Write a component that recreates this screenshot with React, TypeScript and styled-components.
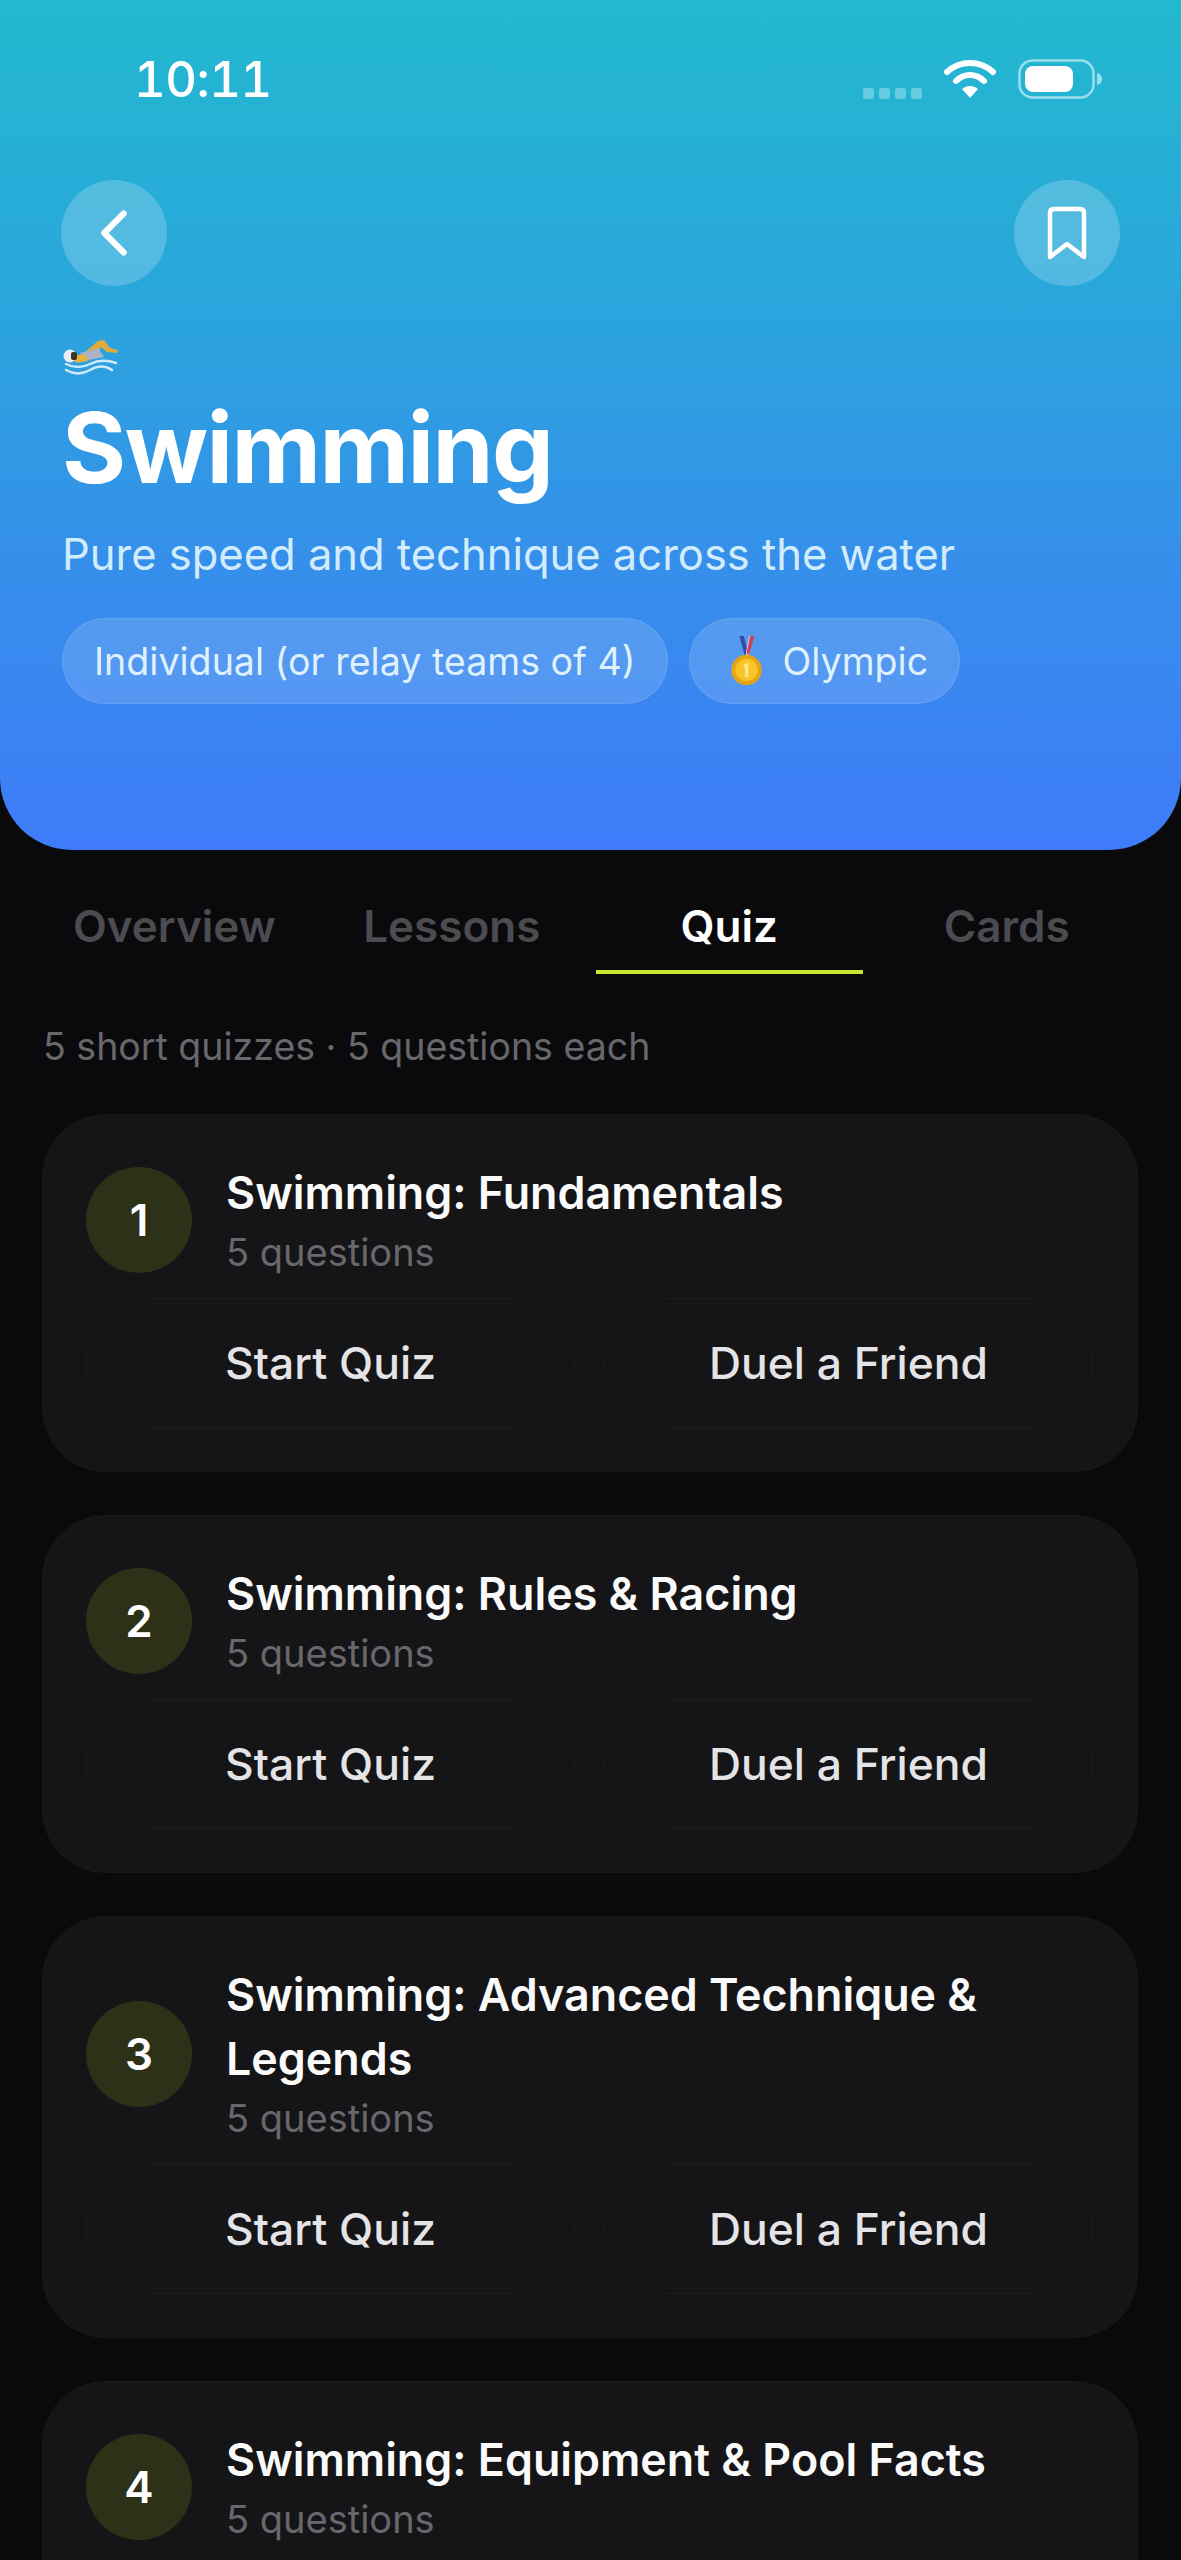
import React from "react";
import styled, { createGlobalStyle } from "styled-components";
import { ChevronLeft } from "lucide-react";

const GlobalStyle = createGlobalStyle`
  html, body {
    margin: 0;
    padding: 0;
    background: #0a0a0c;
  }
  * {
    box-sizing: border-box;
  }
`;

const Page = styled.div`
  width: 1181px;
  height: 2560px;
  overflow: hidden;
  background: #0a0a0c;
  font-family: "Inter", "Liberation Sans", sans-serif;
  color: #fff;
`;

const Hero = styled.header`
  height: 850px;
  padding: 0 62px;
  background: linear-gradient(180deg, #22b9cf 0%, #2aa6dc 35%, #3590ea 65%, #3f7bf9 100%);
  border-radius: 0 0 72px 72px;
`;

const StatusBar = styled.div`
  height: 160px;
  padding: 50px 17px 0 72px;
  display: flex;
  justify-content: space-between;
  align-items: flex-start;
`;

const Clock = styled.div`
  font-size: 49px;
  font-weight: 500;
  line-height: 60px;
  font-variant-numeric: tabular-nums;
  letter-spacing: -0.5px;
`;

const StatusIcons = styled.div`
  display: flex;
  align-items: center;
  gap: 22px;
  margin-top: 9px;
`;

const SignalDots = styled.div`
  display: flex;
  gap: 5px;
  margin-top: 28px;
`;

const SignalDot = styled.span`
  width: 11px;
  height: 11px;
  border-radius: 2px;
  background: rgba(255, 255, 255, 0.3);
`;

const NavRow = styled.div`
  margin: 20px -1px 0;
  display: flex;
  justify-content: space-between;
`;

const RoundButton = styled.button`
  width: 106px;
  height: 106px;
  border: 0;
  padding: 0;
  border-radius: 50%;
  background: rgba(255, 255, 255, 0.2);
  color: #fff;
  display: flex;
  align-items: center;
  justify-content: center;
`;

const SportIcon = styled.div`
  margin-top: 51px;
  height: 40px;
  line-height: 0;
`;

const Title = styled.h1`
  margin: 16px 0 0;
  font-size: 98px;
  line-height: 110px;
  font-weight: 700;
  letter-spacing: -1.5px;
`;

const Subtitle = styled.p`
  margin: 23px 0 0;
  font-size: 43.5px;
  line-height: 56px;
  font-weight: 400;
  color: rgba(226, 246, 255, 0.92);
`;

const ChipRow = styled.div`
  margin-top: 36px;
  display: flex;
  gap: 21px;
`;

const Chip = styled.div`
  height: 86px;
  padding: 0 31px;
  border-radius: 43px;
  background: rgba(255, 255, 255, 0.14);
  border: 1px solid rgba(255, 255, 255, 0.1);
  display: flex;
  align-items: center;
  gap: 20px;
  font-size: 37.6px;
  color: rgba(232, 248, 255, 0.95);
  white-space: nowrap;
`;

const MedalSlot = styled.span`
  margin-left: 9px;
  line-height: 0;
`;

const Tabs = styled.nav`
  margin-top: 42px;
  padding: 0 41px;
  display: grid;
  grid-template-columns: repeat(4, 1fr);
  column-gap: 11px;
`;

const Tab = styled.div<{ $active?: boolean }>`
  height: 82px;
  padding-bottom: 10px;
  display: flex;
  align-items: center;
  justify-content: center;
  font-size: 44px;
  font-weight: 600;
  color: ${(p) => (p.$active ? "#ffffff" : "#4b4b50")};
  border-bottom: 4px solid ${(p) => (p.$active ? "#c8e62e" : "transparent")};
`;

const Content = styled.main`
  padding: 0 43px 0 42px;
`;

const Meta = styled.p`
  margin: 50px 0 44px 1px;
  font-size: 37.5px;
  line-height: 46px;
  color: #67676c;
`;

const CardList = styled.div`
  display: flex;
  flex-direction: column;
  gap: 43px;
`;

const Card = styled.section`
  padding: 46px 44px 43px 43px;
  border-radius: 64px;
  background: #151517;
  border: 1px solid #19191b;
`;

const CardHeader = styled.div`
  display: flex;
  align-items: center;
  gap: 34px;
`;

const NumberBadge = styled.div`
  flex: none;
  width: 106px;
  height: 106px;
  border-radius: 50%;
  background: #2d3118;
  display: flex;
  align-items: center;
  justify-content: center;
  font-size: 44px;
  font-weight: 600;
`;

const CardText = styled.div`
  min-width: 0;
`;

const CardTitle = styled.h2`
  margin: 0;
  font-size: 44.8px;
  line-height: 64px;
  font-weight: 600;
  color: #fafafa;
`;

const CardSub = styled.div`
  font-size: 38px;
  line-height: 54px;
  color: #67676c;
`;

const ActionRow = styled.div`
  margin-top: 19px;
  display: grid;
  grid-template-columns: 1fr 1fr;
  gap: 29px;
`;

const ActionButton = styled.button`
  height: 130px;
  padding: 0;
  border: 1px solid #1c1c1f;
  border-radius: 62px;
  background: transparent;
  color: #e4e4e7;
  font-family: inherit;
  font-size: 44.4px;
  font-weight: 500;
`;

const SwimmerIcon = () => (
  <svg width="56" height="40" viewBox="0 0 56 40">
    <path d="M24 14 L36 4 L42 3 L48 11 L56 13 L55 16 L45 15 L39 10 L36 16 Z" fill="#e0a93a" />
    <path d="M18 16 L36 11 L42 20 L22 24 Z" fill="#a9b3c4" />
    <path d="M10 18 L24 18 L26 24 L14 26 Z" fill="#e8b23c" />
    <circle cx="8" cy="19" r="6.5" fill="#e6edf5" />
    <rect x="9" y="15" width="6" height="8" rx="2" fill="#3c3426" />
    <path d="M4 27 Q16 33 28 27 T54 26 M4 33 Q16 40 28 33 T50 33" fill="none" stroke="#cfe9fb" strokeWidth="2.5" strokeLinecap="round" />
  </svg>
);

const MedalIcon = () => (
  <svg width="33" height="50" viewBox="0 0 36 56">
    <path d="M10 0 L15 0 L20 20 L16 22 Z" fill="#3a4aa8" />
    <path d="M26 0 L21 0 L17 21 L21 22 Z" fill="#e7e4ef" />
    <path d="M22 0 L27 0 L21 21 L18 20 Z" fill="#c8435a" />
    <circle cx="18" cy="38" r="17" fill="#e6a410" />
    <circle cx="18" cy="38" r="12.5" fill="#f7c42a" />
    <path d="M15 32 L20 30 L20 46 L16.5 46 L16.5 35 L15 36 Z" fill="#fde98a" />
  </svg>
);

const WifiIcon = () => (
  <svg width="52" height="40" viewBox="0 0 52 40" fill="none" stroke="#fff" strokeLinecap="round">
    <path d="M3 13 C16 1 36 1 49 13" strokeWidth="6" />
    <path d="M12 22 C20 14 32 14 40 22" strokeWidth="6" />
    <path d="M26 39 L18 30 C23 26 29 26 34 30 Z" fill="#fff" stroke="none" />
  </svg>
);

const BatteryIcon = () => (
  <svg width="84" height="40" viewBox="0 0 84 40">
    <rect x="1.5" y="1.5" width="74" height="37" rx="13" fill="none" stroke="rgba(255,255,255,0.55)" strokeWidth="2.5" />
    <rect x="7" y="7" width="48" height="26" rx="8" fill="#fff" />
    <path d="M79 14 C83 15 84 18 84 20 C84 22 83 25 79 26 Z" fill="rgba(255,255,255,0.55)" />
  </svg>
);

const BookmarkIcon = () => (
  <svg width="40" height="54" viewBox="0 0 40 54" fill="none" stroke="#fff" strokeWidth="4.5" strokeLinejoin="round">
    <path d="M3 7 Q3 3 7 3 H33 Q37 3 37 7 V51 L20 38 L3 51 Z" />
  </svg>
);

const quizzes = [
  { id: 1, title: "Swimming: Fundamentals" },
  { id: 2, title: "Swimming: Rules & Racing" },
  { id: 3, title: "Swimming: Advanced Technique & Legends" },
  { id: 4, title: "Swimming: Equipment & Pool Facts" },
];

const tabs = ["Overview", "Lessons", "Quiz", "Cards"];

export default function App() {
  return (
    <Page>
      <GlobalStyle />
      <Hero>
        <StatusBar>
          <Clock>10:11</Clock>
          <StatusIcons>
            <SignalDots>
              <SignalDot />
              <SignalDot />
              <SignalDot />
              <SignalDot />
            </SignalDots>
            <WifiIcon />
            <BatteryIcon />
          </StatusIcons>
        </StatusBar>
        <NavRow>
          <RoundButton>
            <ChevronLeft size={78} strokeWidth={1.85} />
          </RoundButton>
          <RoundButton>
            <BookmarkIcon />
          </RoundButton>
        </NavRow>
        <SportIcon>
          <SwimmerIcon />
        </SportIcon>
        <Title>Swimming</Title>
        <Subtitle>Pure speed and technique across the water</Subtitle>
        <ChipRow>
          <Chip>Individual (or relay teams of 4)</Chip>
          <Chip>
            <MedalSlot>
              <MedalIcon />
            </MedalSlot>
            Olympic
          </Chip>
        </ChipRow>
      </Hero>
      <Tabs>
        {tabs.map((tab) => (
          <Tab key={tab} $active={tab === "Quiz"}>
            {tab}
          </Tab>
        ))}
      </Tabs>
      <Content>
        <Meta>5 short quizzes · 5 questions each</Meta>
        <CardList>
          {quizzes.map((quiz) => (
            <Card key={quiz.id}>
              <CardHeader>
                <NumberBadge>{quiz.id}</NumberBadge>
                <CardText>
                  <CardTitle>{quiz.title}</CardTitle>
                  <CardSub>5 questions</CardSub>
                </CardText>
              </CardHeader>
              <ActionRow>
                <ActionButton>Start Quiz</ActionButton>
                <ActionButton>Duel a Friend</ActionButton>
              </ActionRow>
            </Card>
          ))}
        </CardList>
      </Content>
    </Page>
  );
}
